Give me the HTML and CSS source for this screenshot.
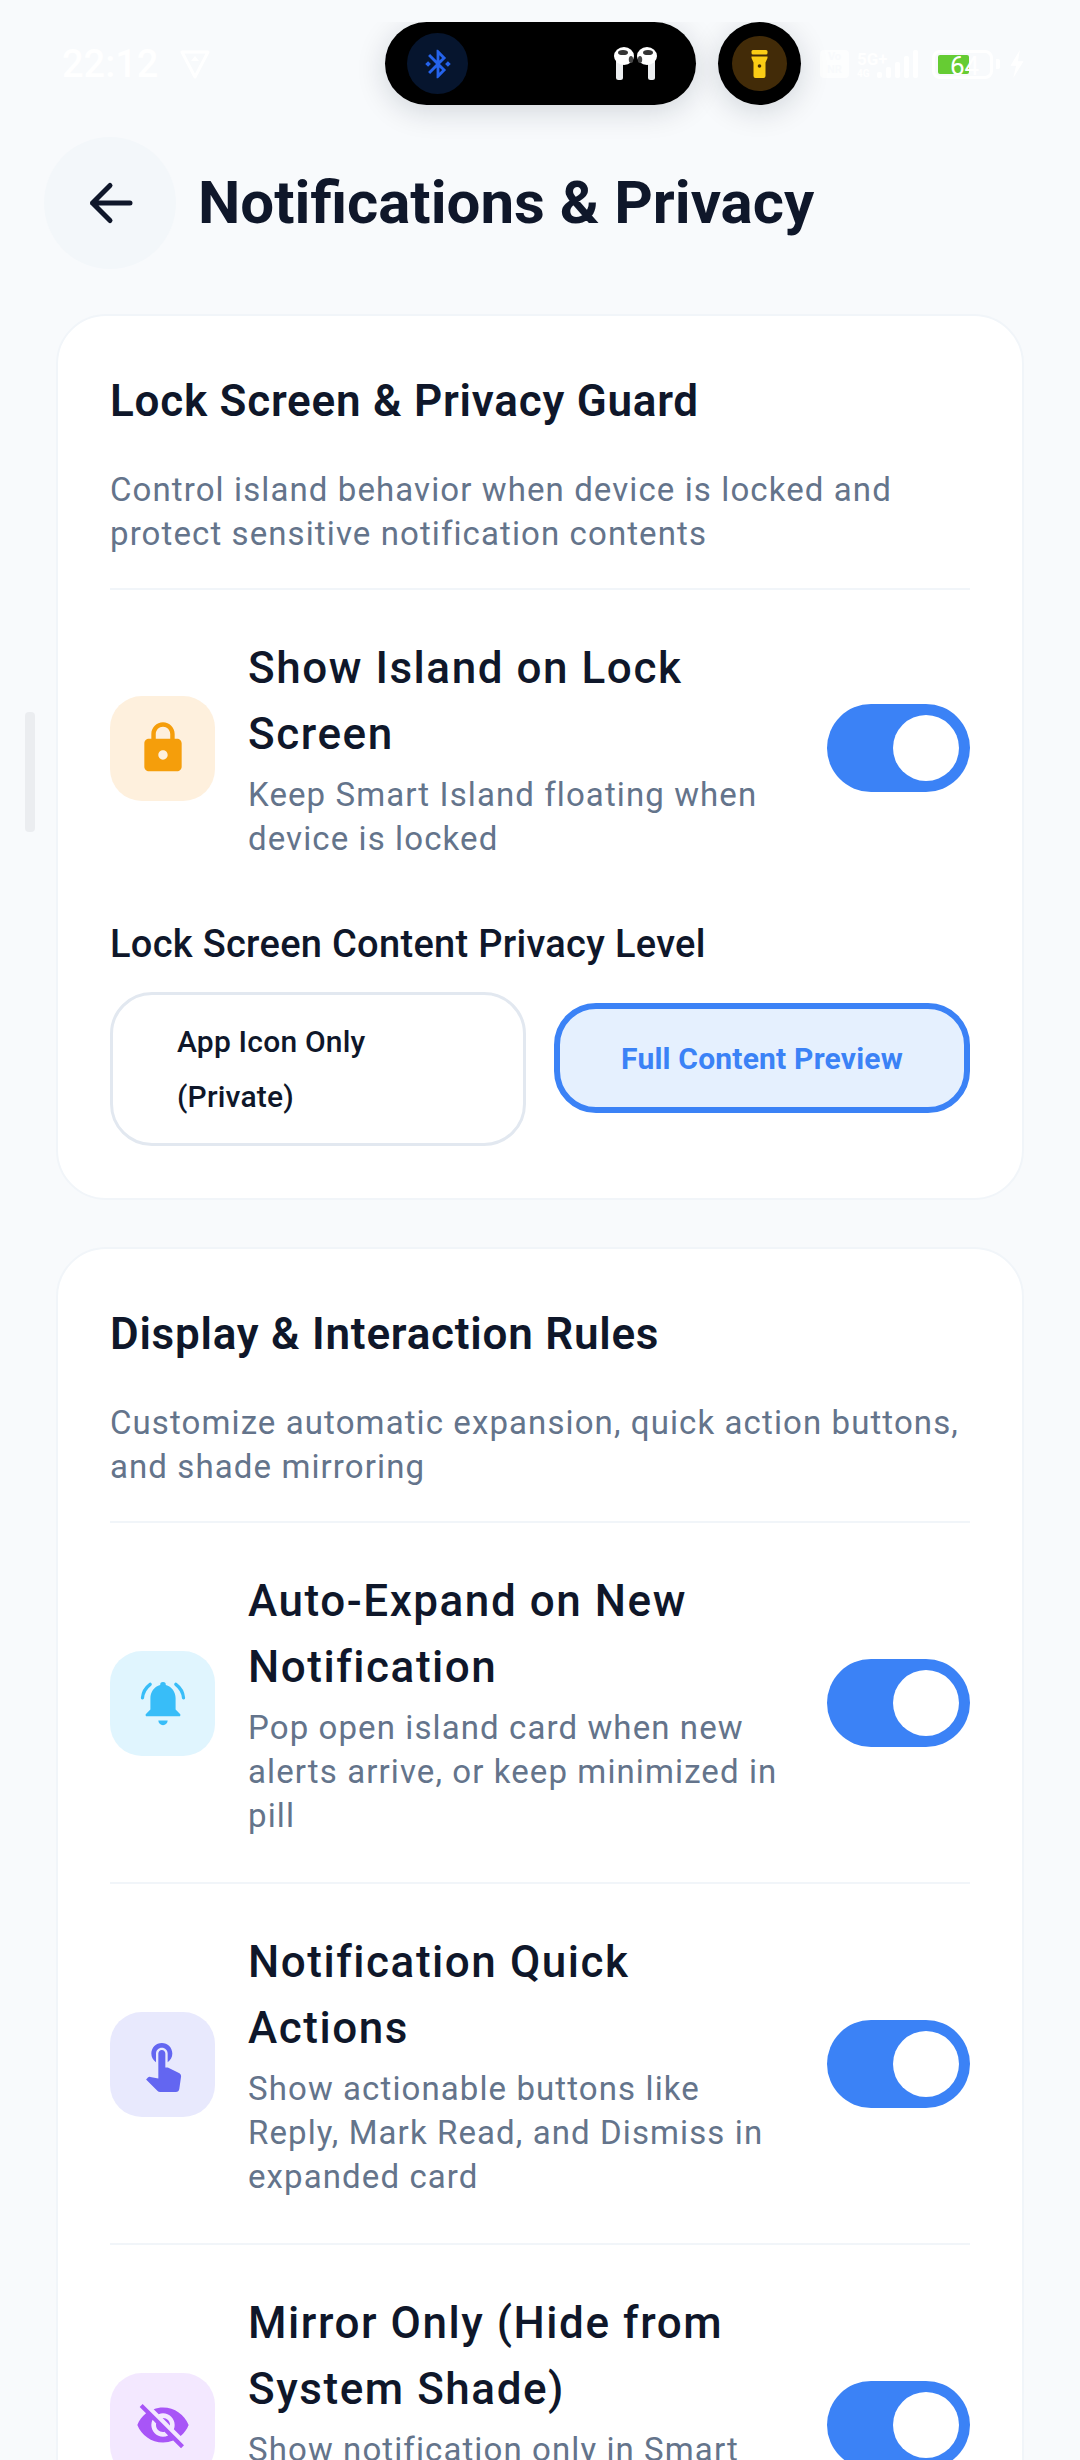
FILE: index.html
```html
<!DOCTYPE html>
<html lang="en">
  <head>
    <meta charset="UTF-8" />
    <meta name="viewport" content="width=device-width, initial-scale=1.0" />
    <title>Notifications &amp; Privacy</title>
    <link rel="stylesheet" href="styles.css">
  </head>
  <body>
    <div class="status-bar">
      <div class="status-left">
        <span class="clock">22:12</span>
        <svg class="status-shield" viewBox="0 0 30 30"><path d="M2 3h26L15 28z" fill="none" stroke="#fff" stroke-width="3" stroke-linejoin="round"/><path d="M11 12l4-5 4 5z" fill="#fff"/></svg>
      </div>
      <div class="status-right">
        <span class="vonr">Vo<br>NR</span>
        <span class="net"><span class="net-5g">5G+</span><span class="net-4g">4G</span></span>
        <span class="signal"><i class="s1"></i><i class="s2"></i><i class="s3"></i><i class="s4"></i><i class="s5"></i></span>
        <span class="battery"><span class="battery-fill"></span><span class="battery-num">64</span></span>
        <span class="battery-cap"></span>
        <svg class="status-bolt" viewBox="0 0 16 30"><path d="M11 0L1 17h6L4 30l11-18H9z" fill="#fff"/></svg>
      </div>
    </div>

    <div class="island-layer">
      <div class="island">
        <span class="island-bt">
          <svg viewBox="0 0 24 24" width="34" height="34"><path fill="#2563eb" d="M7 12l-2-2-2 2 2 2 2-2zm10.71-4.29L12 2h-1v7.59L6.41 5 5 6.41 10.59 12 5 17.59 6.41 19 11 14.41V22h1l5.71-5.71-4.3-4.29 4.3-4.29zM13 5.83l1.88 1.88L13 9.59V5.83zm1.88 10.46L13 18.17v-3.76l1.88 1.88zM19 10l-2 2 2 2 2-2-2-2z"/></svg>
        </span>
        <svg class="pods" viewBox="0 0 43 33">
          <rect x="2" y="10" width="7" height="23" rx="2.500" fill="#eceef0"/>
          <ellipse cx="10" cy="9" rx="10" ry="9" fill="#fff"/>
          <ellipse cx="9" cy="5.500" rx="5" ry="2.600" fill="#333"/>
          <ellipse cx="17" cy="12.500" rx="2.200" ry="3.500" fill="#444"/>
          <rect x="34" y="10" width="7" height="23" rx="2.500" fill="#eceef0"/>
          <ellipse cx="33" cy="9" rx="10" ry="9" fill="#fff"/>
          <ellipse cx="34" cy="5.500" rx="5" ry="2.600" fill="#333"/>
          <ellipse cx="26" cy="12.500" rx="2.200" ry="3.500" fill="#444"/>
        </svg>
      </div>
      <div class="island-dot">
        <span class="island-torch">
          <svg viewBox="0 0 16 28" width="17" height="28"><rect width="16" height="4.500" rx="1.500" fill="#facc15"/><path d="M0 6.500h16v1.500l-2 4.500V26a2 2 0 0 1-2 2H4a2 2 0 0 1-2-2V12.500L0 8z" fill="#facc15"/><circle cx="8" cy="16" r="1.800" fill="#422b08"/></svg>
        </span>
      </div>
    </div>

    <div class="scroll-thumb"></div>

    <header class="top-bar">
      <button class="back-btn">
        <svg viewBox="0 0 24 24" width="60" height="60"><path d="M20 12H5M12 5l-7 7 7 7" fill="none" stroke="#0f172a" stroke-width="2" stroke-linecap="round" stroke-linejoin="round"/></svg>
      </button>
      <h1>Notifications &amp; Privacy</h1>
    </header>

    <main class="content">
      <section class="card">
        <h2>Lock Screen &amp; Privacy Guard</h2>
        <p class="card-desc">Control island behavior when device is locked and protect sensitive notification contents</p>
        <div class="setting no-line">
          <span class="tile tile-amber">
            <svg viewBox="0 0 24 24" width="56" height="56"><path fill="#f59e0b" d="M18 8h-1V6c0-2.760-2.240-5-5-5S7 3.240 7 6v2H6c-1.100 0-2 .9-2 2v10c0 1.100.9 2 2 2h12c1.100 0 2-.9 2-2V10c0-1.100-.9-2-2-2zm-6 9c-1.100 0-2-.9-2-2s.9-2 2-2 2 .9 2 2-.9 2-2 2zm3.100-9H8.900V6c0-1.710 1.390-3.100 3.100-3.100 1.710 0 3.100 1.390 3.100 3.100v2z"/></svg>
          </span>
          <div class="setting-text">
            <div class="setting-title">Show Island on Lock Screen</div>
            <div class="setting-sub">Keep Smart Island floating when device is locked</div>
          </div>
          <span class="toggle"><span class="knob"></span></span>
        </div>
        <h3>Lock Screen Content Privacy Level</h3>
        <div class="privacy-options">
          <button class="option">App Icon Only (Private)</button>
          <button class="option active">Full Content Preview</button>
        </div>
      </section>

      <section class="card">
        <h2>Display &amp; Interaction Rules</h2>
        <p class="card-desc">Customize automatic expansion, quick action buttons, and shade mirroring</p>
        <div class="setting">
          <span class="tile tile-sky">
            <svg viewBox="0 0 24 24" width="56" height="56"><path fill="#38bdf8" d="M12 3a1.200 1.200 0 0 0-1.200 1.300C8.300 5 6.600 7.200 6.600 10v4.800l-1.800 1.800a.6.6 0 0 0 .4 1.100h13.600a.6.6 0 0 0 .4-1.100l-1.800-1.800V10c0-2.800-1.700-5-4.200-5.700A1.200 1.200 0 0 0 12 3zM10 19.500h4a2 2 0 0 1-4 0z"/><path d="M6.500 4C4.500 5.500 3.400 7.500 3.200 9.800M17.500 4c2 1.500 3.100 3.500 3.300 5.800" fill="none" stroke="#38bdf8" stroke-width="1.400" stroke-linecap="round"/></svg>
          </span>
          <div class="setting-text">
            <div class="setting-title">Auto-Expand on New Notification</div>
            <div class="setting-sub">Pop open island card when new alerts arrive, or keep minimized in pill</div>
          </div>
          <span class="toggle"><span class="knob"></span></span>
        </div>
        <div class="setting">
          <span class="tile tile-indigo">
            <svg viewBox="0 0 24 24" width="56" height="56"><path fill="#6366f1" d="M9 11.240V7.500C9 6.120 10.120 5 11.500 5S14 6.120 14 7.500v3.740c1.210-.81 2-2.180 2-3.740C16 5.010 13.990 3 11.500 3S7 5.010 7 7.500c0 1.560.79 2.930 2 3.740zm9.840 4.630l-4.540-2.260c-.17-.07-.35-.11-.54-.11H13v-6c0-.83-.67-1.500-1.500-1.500S10 6.670 10 7.500v10.740l-3.430-.72c-.08-.01-.15-.03-.24-.03-.31 0-.59.13-.79.33l-.79.8 4.940 4.940c.27.27.65.44 1.060.44h6.790c.75 0 1.330-.55 1.440-1.280l.75-5.270c.01-.07.02-.14.02-.2 0-.62-.38-1.160-.91-1.380z"/></svg>
          </span>
          <div class="setting-text">
            <div class="setting-title">Notification Quick Actions</div>
            <div class="setting-sub">Show actionable buttons like Reply, Mark Read, and Dismiss in expanded card</div>
          </div>
          <span class="toggle"><span class="knob"></span></span>
        </div>
        <div class="setting">
          <span class="tile tile-purple">
            <svg viewBox="0 0 24 24" width="56" height="56"><path fill="#a855f7" d="M12 7c2.760 0 5 2.240 5 5 0 .65-.13 1.260-.36 1.830l2.920 2.920c1.510-1.260 2.700-2.890 3.430-4.750-1.730-4.390-6-7.500-11-7.500-1.400 0-2.740.25-3.980.7l2.160 2.160C10.740 7.130 11.350 7 12 7zM2 4.270l2.280 2.280.46.46C3.080 8.300 1.780 10.020 1 12c1.730 4.390 6 7.500 11 7.500 1.550 0 3.030-.3 4.380-.84l.42.42L19.730 22 21 20.730 3.270 3 2 4.270zM7.530 9.800l1.550 1.550c-.05.21-.08.43-.08.65 0 1.660 1.340 3 3 3 .22 0 .44-.03.65-.08l1.550 1.550c-.67.33-1.410.53-2.200.53-2.760 0-5-2.240-5-5 0-.79.2-1.530.53-2.200zm4.310-.78l3.150 3.150.02-.16c0-1.660-1.340-3-3-3l-.17.01z"/></svg>
          </span>
          <div class="setting-text">
            <div class="setting-title">Mirror Only (Hide from System Shade)</div>
            <div class="setting-sub">Show notification only in Smart Island and hide it from the system notification shade</div>
          </div>
          <span class="toggle"><span class="knob"></span></span>
        </div>
      </section>
    </main>
  </body>
</html>
```

FILE: styles.css
```css
:root {
  --page-bg: #f8fafc;
  --text-dark: #0f172a;
  --text-muted: #64748b;
  --line: #f1f5f9;
  --blue: #3b82f6;
}

* {
  box-sizing: border-box;
}

html,
body {
  height: 2460px;
  overflow: hidden;
}

body {
  margin: 0;
  position: relative;
  background: var(--page-bg);
  color: var(--text-dark);
  font-family: Roboto, sans-serif;
}

/* status bar */
.status-bar {
  height: 137px;
  padding: 0 55px 0 62px;
  display: flex;
  justify-content: space-between;
  align-items: flex-start;
  color: #fff;
}

.status-left {
  display: flex;
  align-items: center;
  gap: 22px;
  margin-top: 43px;
}

.clock {
  font-size: 38px;
  line-height: 42px;
  font-weight: 500;
}

.status-shield {
  width: 30px;
  height: 30px;
}

.status-right {
  display: flex;
  align-items: center;
  margin-top: 49px;
  height: 30px;
}

.vonr {
  width: 29px;
  height: 28px;
  margin-right: 8px;
  background: rgba(255, 255, 255, 0.7);
  border-radius: 4px;
  color: var(--page-bg);
  font-size: 11px;
  line-height: 13px;
  font-weight: 700;
  text-align: center;
}

.net {
  display: flex;
  flex-direction: column;
  width: 20px;
  font-weight: 700;
  white-space: nowrap;
}

.net-5g {
  font-size: 17px;
  line-height: 18px;
}

.net-4g {
  font-size: 10px;
  line-height: 11px;
}

.signal {
  display: flex;
  align-items: flex-end;
  gap: 4px;
  height: 28px;
  margin-right: 14px;
}

.signal i {
  display: block;
  width: 5px;
  background: #fff;
  border-radius: 2px;
}

.s1 { height: 6px; }
.s2 { height: 11px; }
.s3 { height: 16px; }
.s4 { height: 22px; }
.s5 { height: 28px; }

.battery {
  position: relative;
  width: 61px;
  height: 29px;
  border: 3px solid #fff;
  border-radius: 8px;
}

.battery-fill {
  position: absolute;
  left: 3px;
  top: 2px;
  width: 31px;
  height: 19px;
  background: #66cc33;
  border-radius: 2px;
}

.battery-num {
  position: absolute;
  left: 15px;
  top: 0;
  font-size: 26px;
  line-height: 26px;
  color: #fff;
}

.battery-cap {
  width: 4px;
  height: 10px;
  margin-left: 3px;
  background: #fff;
  border-radius: 0 2px 2px 0;
}

.status-bolt {
  width: 16px;
  height: 28px;
  margin-left: 9px;
}

/* floating island over the status bar */
.island-layer {
  position: absolute;
  left: 320px;
  top: 22px;
  width: 540px;
  height: 126px;
  overflow: hidden;
  padding-left: 65px;
  display: flex;
  gap: 22px;
}

.island {
  width: 311px;
  height: 83px;
  padding: 0 39px 0 22px;
  background: #000;
  border-radius: 42px;
  box-shadow: 0 6px 30px rgba(15, 23, 42, 0.16);
  display: flex;
  justify-content: space-between;
  align-items: center;
}

.island-bt {
  width: 61px;
  height: 61px;
  background: #06152e;
  border-radius: 50%;
  display: flex;
  justify-content: center;
  align-items: center;
}

.pods {
  width: 43px;
  height: 33px;
}

.island-dot {
  width: 83px;
  height: 83px;
  background: #000;
  border-radius: 50%;
  box-shadow: 0 6px 30px rgba(15, 23, 42, 0.16);
  display: flex;
  justify-content: center;
  align-items: center;
}

.island-torch {
  width: 55px;
  height: 55px;
  background: #422b08;
  border-radius: 50%;
  display: flex;
  justify-content: center;
  align-items: center;
}

.scroll-thumb {
  position: absolute;
  left: 25px;
  top: 712px;
  width: 10px;
  height: 120px;
  background: #ebedf0;
  border-radius: 4px;
}

/* header */
.top-bar {
  display: flex;
  align-items: center;
  gap: 22px;
  padding-left: 44px;
  height: 132px;
}

.back-btn {
  width: 132px;
  height: 132px;
  padding: 0;
  border: none;
  background: #f3f7fa;
  border-radius: 50%;
  display: flex;
  justify-content: center;
  align-items: center;
}

h1 {
  margin: 0;
  font-size: 60px;
  line-height: 68px;
  font-weight: 700;
}

/* cards */
.content {
  padding: 45px 56px 0;
  display: flex;
  flex-direction: column;
  gap: 47px;
}

.card {
  background: #fff;
  border: 2px solid var(--line);
  border-radius: 50px;
  padding: 59px 52px 52px;
}

h2 {
  margin: 0;
  font-size: 44px;
  line-height: 52px;
  font-weight: 600;
  letter-spacing: 0.76px;
}

.card-desc {
  margin: 41px 0 0;
  padding-bottom: 32px;
  font-size: 33px;
  line-height: 44px;
  letter-spacing: 1.1px;
  color: var(--text-muted);
  border-bottom: 2px solid var(--line);
}

.setting {
  display: flex;
  align-items: center;
  gap: 33px;
  padding: 45px 0 44px;
  border-bottom: 2px solid var(--line);
}

.setting.no-line {
  border-bottom: none;
  padding-bottom: 0;
}

.setting:last-child {
  border-bottom: none;
}

.tile {
  flex: none;
  width: 105px;
  height: 105px;
  border-radius: 32px;
  display: flex;
  justify-content: center;
  align-items: center;
}

.tile-amber { background: #fef0dd; }
.tile-sky { background: #e0f5fe; }
.tile-indigo { background: #e8e9fd; }
.tile-purple { background: #f3e8ff; }

.setting-text {
  flex: 1;
}

.setting-title {
  font-size: 44px;
  line-height: 66px;
  font-weight: 500;
  letter-spacing: 1.55px;
}

.setting-sub {
  margin-top: 6px;
  font-size: 33px;
  line-height: 44px;
  letter-spacing: 1.1px;
  color: var(--text-muted);
}

.toggle {
  flex: none;
  width: 143px;
  height: 88px;
  padding: 11px;
  background: var(--blue);
  border-radius: 44px;
  display: flex;
  justify-content: flex-end;
}

.knob {
  width: 66px;
  height: 66px;
  background: #fff;
  border-radius: 50%;
}

h3 {
  margin: 58px 0 0;
  font-size: 38px;
  line-height: 50px;
  font-weight: 500;
  letter-spacing: 0.3px;
}

.privacy-options {
  display: grid;
  grid-template-columns: 1fr 1fr;
  align-items: start;
  gap: 28px;
  margin-top: 23px;
}

.option {
  padding: 19px 64px;
  border: 3px solid #e2e8f0;
  border-radius: 42px;
  background: #fff;
  font-family: inherit;
  font-size: 30px;
  line-height: 55px;
  font-weight: 500;
  letter-spacing: 0.2px;
  text-align: left;
  color: var(--text-dark);
}

.option.active {
  margin-top: 11px;
  padding: 21.5px 30px;
  border: 6px solid var(--blue);
  background: #e5f0fe;
  color: var(--blue);
  font-weight: 700;
  text-align: center;
}
```
